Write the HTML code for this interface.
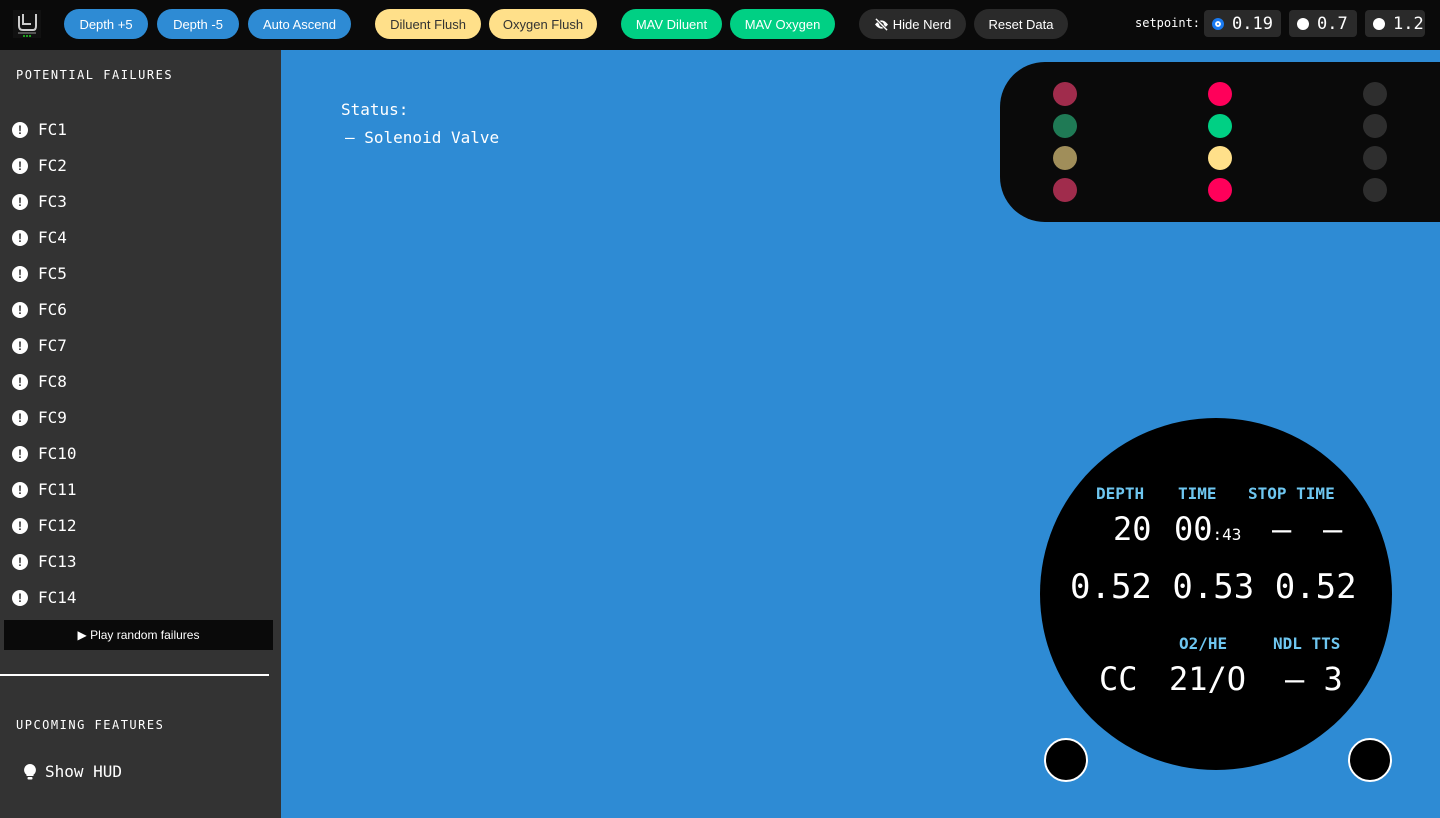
<!DOCTYPE html><html><head><style>
*{margin:0;padding:0;box-sizing:border-box}
body{width:1440px;height:818px;overflow:hidden;background:#2e8bd4;font-family:"DejaVu Sans Mono",monospace;position:relative}
.top{position:absolute;left:0;top:0;width:1440px;height:50px;background:#0a0a0a}
.b{position:absolute;top:9px;height:30px;border-radius:15px;font:13px "Liberation Sans",sans-serif;display:flex;align-items:center;justify-content:center}
.bl{background:#2e8bd4;color:#fff}.y{background:#ffe08a;color:#333}.g{background:#00d084;color:#fff}.d{background:#2a2a2a;color:#fff}
.sp{position:absolute;top:10px;height:27px;background:#2a2a2a;border-radius:4px;color:#fff;font-size:17px;display:flex;align-items:center;padding-left:8px}
.rd{width:12px;height:12px;border-radius:50%;background:#fff;margin-right:8px}
.side{position:absolute;left:0;top:50px;width:281px;height:768px;background:#333;color:#fff}
.it{position:absolute;left:12px;font-size:16px;display:flex;align-items:center}
.ic{width:16px;height:16px;border-radius:50%;background:#fff;color:#333;font:bold 12px "Liberation Sans",sans-serif;display:flex;align-items:center;justify-content:center;margin-right:10px}
.hd{position:absolute;left:16px;font-size:12px;letter-spacing:1.5px}
.dot{position:absolute;width:24px;height:24px;border-radius:50%}
.c{position:absolute;color:#fff;white-space:pre}
.l{position:absolute;color:#6ec6f0;font-weight:bold;font-size:16px;white-space:pre}
</style></head><body>
<div class="top">
<svg style="position:absolute;left:13px;top:10px" width="28" height="28" viewBox="0 0 28 28"><rect width="28" height="28" fill="#111"/><path d="M6 6v10q0 4 4 4h10q3 0 3-4V4M10 4v10h8" stroke="#ccc" stroke-width="2" fill="none"/><path d="M5 23h18" stroke="#999"/><circle cx="11" cy="26" r="1" fill="#2c2"/><circle cx="14" cy="26" r="1" fill="#2c2"/><circle cx="17" cy="26" r="1" fill="#2c2"/></svg>
<div class="b bl" style="left:64px;width:84px">Depth +5</div>
<div class="b bl" style="left:157px;width:82px">Depth -5</div>
<div class="b bl" style="left:248px;width:103px">Auto Ascend</div>
<div class="b y" style="left:375px;width:106px">Diluent Flush</div>
<div class="b y" style="left:489px;width:108px">Oxygen Flush</div>
<div class="b g" style="left:621px;width:101px">MAV Diluent</div>
<div class="b g" style="left:730px;width:105px">MAV Oxygen</div>
<div class="b d" style="left:859px;width:107px"><svg width="15" height="13" viewBox="0 0 16 14" style="margin-right:4px"><path d="M1 7q7-9 14 0q-7 9-14 0z" fill="#fff"/><circle cx="8" cy="7" r="2.5" fill="#2a2a2a"/><path d="M2 1l12 12" stroke="#2a2a2a" stroke-width="3"/><path d="M2 1l12 12" stroke="#fff" stroke-width="1.5"/></svg>Hide Nerd</div>
<div class="b d" style="left:974px;width:94px">Reset Data</div>
<div class="c" style="left:1135px;top:16px;font-size:12px">setpoint:</div>
<div class="sp" style="left:1204px;width:77px"><div class="rd" style="background:#1a7af0;border:3px solid #1a7af0;box-shadow:inset 0 0 0 2px #fff"></div>0.19</div>
<div class="sp" style="left:1289px;width:68px"><div class="rd"></div>0.7</div>
<div class="sp" style="left:1365px;width:60px"><div class="rd"></div>1.2</div>
</div>
<div class="side">
<div class="hd" style="top:18px">POTENTIAL FAILURES</div>
<div class="it" style="top:70px"><div class="ic">!</div>FC1</div>
<div class="it" style="top:106px"><div class="ic">!</div>FC2</div>
<div class="it" style="top:142px"><div class="ic">!</div>FC3</div>
<div class="it" style="top:178px"><div class="ic">!</div>FC4</div>
<div class="it" style="top:214px"><div class="ic">!</div>FC5</div>
<div class="it" style="top:250px"><div class="ic">!</div>FC6</div>
<div class="it" style="top:286px"><div class="ic">!</div>FC7</div>
<div class="it" style="top:322px"><div class="ic">!</div>FC8</div>
<div class="it" style="top:358px"><div class="ic">!</div>FC9</div>
<div class="it" style="top:394px"><div class="ic">!</div>FC10</div>
<div class="it" style="top:430px"><div class="ic">!</div>FC11</div>
<div class="it" style="top:466px"><div class="ic">!</div>FC12</div>
<div class="it" style="top:502px"><div class="ic">!</div>FC13</div>
<div class="it" style="top:538px"><div class="ic">!</div>FC14</div>
<div style="position:absolute;left:4px;top:570px;width:269px;height:30px;background:#0a0a0a;font:12px 'Liberation Sans',sans-serif;display:flex;align-items:center;justify-content:center">▶&nbsp;Play random failures</div>
<div style="position:absolute;left:0;top:624px;width:269px;height:2px;background:#fff"></div>
<div class="hd" style="top:668px">UPCOMING FEATURES</div>
<div class="it" style="top:712px;left:24px"><svg width="12" height="16" viewBox="0 0 12 16" style="margin-right:9px"><path d="M6 0a6 6 0 0 0-3.5 10.8V12h7v-1.2A6 6 0 0 0 6 0z" fill="#fff"/><rect x="3.5" y="13" width="5" height="2.5" rx="1" fill="#fff"/></svg>Show HUD</div>
</div>
<div class="c" style="left:341px;top:100px;font-size:16px">Status:</div>
<div class="c" style="left:345px;top:128px;font-size:16px">– Solenoid Valve</div>
<div style="position:absolute;left:1000px;top:62px;width:500px;height:160px;background:#0a0a0a;border-radius:45px"></div>
<div class="dot" style="left:1053px;top:82px;background:#a02c4c"></div><div class="dot" style="left:1208px;top:82px;background:#ff005a"></div><div class="dot" style="left:1363px;top:82px;background:#2e2e2e"></div>
<div class="dot" style="left:1053px;top:114px;background:#1f7a55"></div><div class="dot" style="left:1208px;top:114px;background:#00d084"></div><div class="dot" style="left:1363px;top:114px;background:#2e2e2e"></div>
<div class="dot" style="left:1053px;top:146px;background:#a08e5a"></div><div class="dot" style="left:1208px;top:146px;background:#ffe08a"></div><div class="dot" style="left:1363px;top:146px;background:#2e2e2e"></div>
<div class="dot" style="left:1053px;top:178px;background:#a02c4c"></div><div class="dot" style="left:1208px;top:178px;background:#ff005a"></div><div class="dot" style="left:1363px;top:178px;background:#2e2e2e"></div>
<div style="position:absolute;left:1040px;top:418px;width:352px;height:352px;border-radius:50%;background:#000"></div>
<div class="l" style="left:1096px;top:484px">DEPTH</div>
<div class="l" style="left:1178px;top:484px">TIME</div>
<div class="l" style="left:1248px;top:484px">STOP TIME</div>
<div class="c" style="left:1113px;top:510px;font-size:32px">20</div>
<div class="c" style="left:1174px;top:510px;font-size:32px">00<span style="font-size:16px">:43</span></div>
<div class="c" style="left:1272px;top:510px;font-size:32px">–</div>
<div class="c" style="left:1323px;top:510px;font-size:32px">–</div>
<div class="c" style="left:1070px;top:567px;font-size:34px">0.52 0.53 0.52</div>
<div class="l" style="left:1179px;top:634px">O2/HE</div>
<div class="l" style="left:1273px;top:634px">NDL TTS</div>
<div class="c" style="left:1099px;top:660px;font-size:32px">CC</div>
<div class="c" style="left:1169px;top:660px;font-size:32px">21/O</div>
<div class="c" style="left:1285px;top:660px;font-size:32px">– 3</div>
<div style="position:absolute;left:1044px;top:738px;width:44px;height:44px;border-radius:50%;background:#000;border:2px solid #fff"></div>
<div style="position:absolute;left:1348px;top:738px;width:44px;height:44px;border-radius:50%;background:#000;border:2px solid #fff"></div>
</body></html>
